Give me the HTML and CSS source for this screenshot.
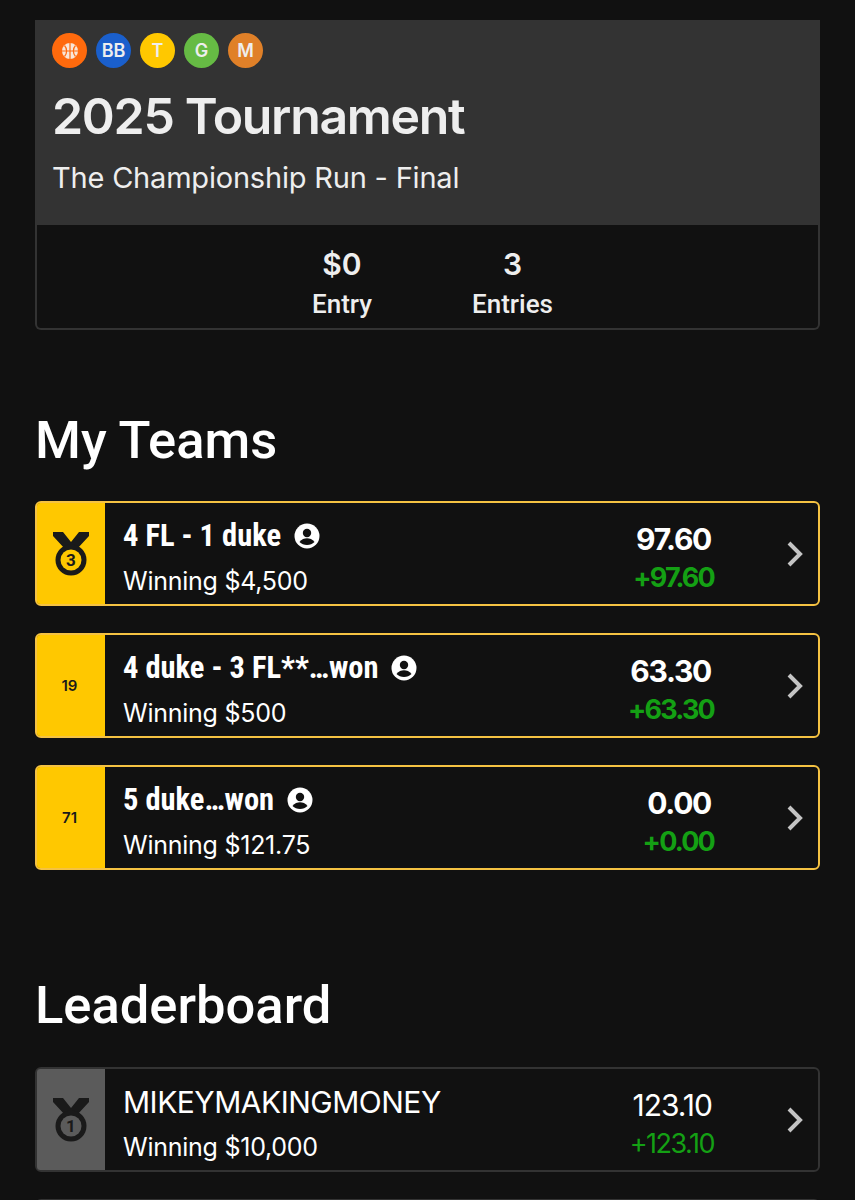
FILE: index.html
```html
<!DOCTYPE html>
<html lang="en">
<head>
    <meta charset="UTF-8">
    <meta name="viewport" content="width=device-width, initial-scale=1.0">
    <title>2025 Tournament</title>
    <link rel="stylesheet" href="styles.css">
</head>
<body>
    <!-- Tournament summary -->
    <section class="summary">
        <div class="summary-top">
            <div class="badges">
                <span class="badge badge-orange">
                    <svg width="18" height="18" viewBox="0 0 18 18" fill="none">
                        <circle cx="9" cy="9" r="8" fill="#f8e6d8"/>
                        <path d="M9 1v16M1 9h16" stroke="#ff6a0d" stroke-width="1.2"/>
                        <path d="M3.500 3.500c2.800 3 2.800 8 0 11M14.500 3.500c-2.800 3-2.800 8 0 11" stroke="#ff6a0d" stroke-width="1.2"/>
                    </svg>
                </span>
                <span class="badge badge-blue">BB</span>
                <span class="badge badge-yellow">T</span>
                <span class="badge badge-green">G</span>
                <span class="badge badge-amber">M</span>
            </div>
            <h1>2025 Tournament</h1>
            <p class="subtitle">The Championship Run - Final</p>
        </div>
        <div class="stats">
            <div class="stat">
                <div class="stat-value">$0</div>
                <div class="stat-label">Entry</div>
            </div>
            <div class="stat">
                <div class="stat-value">3</div>
                <div class="stat-label">Entries</div>
            </div>
        </div>
    </section>

    <h2 class="section-title teams-title">My Teams</h2>

    <div class="rows">
        <div class="row row-mine">
            <div class="rank">
                <svg class="medal" width="36" height="44" viewBox="0 0 36 44">
                    <path d="M0 0h10l8 10 8-10h10v4L24 17H12L0 4z" fill="#1a1a1a"/>
                    <circle cx="18" cy="28" r="15.500" fill="#1a1a1a"/>
                    <circle cx="18" cy="28" r="10.500" fill="#ffc800"/>
                    <text x="18" y="34" text-anchor="middle" class="medal-num">3</text>
                </svg>
            </div>
            <div class="info">
                <div class="team-name">4 FL - 1 duke
                    <svg class="user" width="26" height="26" viewBox="0 0 26 26"><circle cx="13" cy="13" r="12.500" fill="#fff"/><circle cx="13" cy="10" r="4.200" fill="#111"/><path d="M5.500 19c2-3 5-3.800 7.500-3.800s5.500.8 7.500 3.800c-2 2-4.600 3-7.500 3s-5.500-1-7.500-3z" fill="#111"/></svg>
                </div>
                <div class="winning">Winning $4,500</div>
            </div>
            <div class="score">
                <div class="points">97.60</div>
                <div class="delta">+97.60</div>
            </div>
            <svg class="chev" width="18" height="26" viewBox="0 0 18 26" fill="none"><path d="M3 2l11 11L3 24" stroke="#c4c4c4" stroke-width="4"/></svg>
        </div>

        <div class="row row-mine">
            <div class="rank">19</div>
            <div class="info">
                <div class="team-name">4 duke - 3 FL**…won
                    <svg class="user" width="26" height="26" viewBox="0 0 26 26"><circle cx="13" cy="13" r="12.500" fill="#fff"/><circle cx="13" cy="10" r="4.200" fill="#111"/><path d="M5.500 19c2-3 5-3.800 7.500-3.800s5.500.8 7.500 3.800c-2 2-4.600 3-7.500 3s-5.500-1-7.500-3z" fill="#111"/></svg>
                </div>
                <div class="winning">Winning $500</div>
            </div>
            <div class="score">
                <div class="points">63.30</div>
                <div class="delta">+63.30</div>
            </div>
            <svg class="chev" width="18" height="26" viewBox="0 0 18 26" fill="none"><path d="M3 2l11 11L3 24" stroke="#c4c4c4" stroke-width="4"/></svg>
        </div>

        <div class="row row-mine">
            <div class="rank">71</div>
            <div class="info">
                <div class="team-name">5 duke…won
                    <svg class="user" width="26" height="26" viewBox="0 0 26 26"><circle cx="13" cy="13" r="12.500" fill="#fff"/><circle cx="13" cy="10" r="4.200" fill="#111"/><path d="M5.500 19c2-3 5-3.800 7.500-3.800s5.500.8 7.500 3.800c-2 2-4.600 3-7.500 3s-5.500-1-7.500-3z" fill="#111"/></svg>
                </div>
                <div class="winning">Winning $121.75</div>
            </div>
            <div class="score">
                <div class="points">0.00</div>
                <div class="delta">+0.00</div>
            </div>
            <svg class="chev" width="18" height="26" viewBox="0 0 18 26" fill="none"><path d="M3 2l11 11L3 24" stroke="#c4c4c4" stroke-width="4"/></svg>
        </div>
    </div>

    <h2 class="section-title board-title">Leaderboard</h2>

    <div class="rows">
        <div class="row row-other">
            <div class="rank">
                <svg class="medal" width="36" height="44" viewBox="0 0 36 44">
                    <path d="M0 0h10l8 10 8-10h10v4L24 17H12L0 4z" fill="#1a1a1a"/>
                    <circle cx="18" cy="28" r="15.500" fill="#1a1a1a"/>
                    <circle cx="18" cy="28" r="10.500" fill="#5b5b5b"/>
                    <text x="18" y="34" text-anchor="middle" class="medal-num">1</text>
                </svg>
            </div>
            <div class="info">
                <div class="player-name">MIKEYMAKINGMONEY</div>
                <div class="winning">Winning $10,000</div>
            </div>
            <div class="score">
                <div class="points points-light">123.10</div>
                <div class="delta delta-light">+123.10</div>
            </div>
            <svg class="chev" width="18" height="26" viewBox="0 0 18 26" fill="none"><path d="M3 2l11 11L3 24" stroke="#c4c4c4" stroke-width="4"/></svg>
        </div>
        <div class="row row-other"></div>
    </div>
</body>
</html>
```

FILE: styles.css
```css
/* General Styles */
html {
    overflow: hidden;
    height: 1200px;
}

body {
    font-family: Inter, "Noto Sans", sans-serif;
    margin: 0;
    padding: 20px 35px 0 35px;
    background-color: #111;
    color: #fff;
}

/* Tournament summary */
.summary {
    border: 2px solid #333;
    border-top: none;
    border-radius: 0 0 6px 6px;
}

.summary-top {
    background-color: #333;
    margin: 0 -1px;
    height: 205px;
    padding: 13px 16px 0 16px;
    box-sizing: border-box;
}

.badges {
    display: flex;
    gap: 9px;
}

.badge {
    width: 35px;
    height: 35px;
    border-radius: 50%;
    display: flex;
    align-items: center;
    justify-content: center;
    font-size: 18px;
    font-weight: 600;
    color: #eee;
}

.badge-orange { background-color: #ff6a0d; }
.badge-blue { background-color: #1a5fcc; }
.badge-yellow { background-color: #ffc800; }
.badge-green { background-color: #66bb44; }
.badge-amber { background-color: #e08028; }

h1 {
    font-size: 50px;
    line-height: 60px;
    font-weight: 600;
    letter-spacing: -1.3px;
    color: #eee;
    margin: 18px 0 0 0;
}

.subtitle {
    font-size: 29px;
    line-height: 36px;
    letter-spacing: -0.2px;
    color: #eee;
    margin: 14px 0 0 0;
}

.stats {
    display: flex;
    justify-content: center;
    gap: 100px;
    height: 103px;
    padding: 21px 0 0 10px;
    box-sizing: border-box;
}

.stat {
    text-align: center;
    color: #eee;
}

.stat-value {
    font-size: 30px;
    line-height: 36px;
    font-weight: 600;
}

.stat-label {
    font-size: 26px;
    line-height: 36px;
    font-weight: 500;
    font-family: Roboto, sans-serif;
    margin-top: 4px;
}

/* Section headings */
.section-title {
    font-size: 52.5px;
    line-height: 60px;
    font-weight: 500;
    font-family: Roboto, sans-serif;
    margin: 0;
}

.teams-title {
    margin-top: 80px;
    margin-bottom: 31px;
}

.board-title {
    margin-top: 105px;
    margin-bottom: 32px;
}

/* Team rows */
.rows {
    display: flex;
    flex-direction: column;
    gap: 27px;
}

.row {
    display: flex;
    align-items: center;
    height: 105px;
    min-height: 105px;
    box-sizing: border-box;
    border: 2px solid;
    border-radius: 6px;
    background-color: #111;
}

.row-mine { border-color: #f5c242; }
.row-other { border-color: #333; }

.rank {
    width: 68px;
    align-self: stretch;
    flex-shrink: 0;
    display: flex;
    align-items: center;
    justify-content: center;
    font-size: 15px;
    font-weight: 600;
    color: #1a1a1a;
    border-radius: 3px 0 0 3px;
    padding-right: 3px;
    box-sizing: border-box;
}

.row-mine .rank { background-color: #ffc800; }
.row-other .rank { background-color: #5b5b5b; }

.medal {
    margin-left: 3px;
}

.medal-num {
    font-family: Roboto, sans-serif;
    font-size: 17px;
    font-weight: 700;
    fill: #1a1a1a;
}

.info {
    flex-grow: 1;
    padding: 10px 0 0 18px;
}

.team-name {
    display: flex;
    align-items: center;
    gap: 13px;
    font-family: Roboto, sans-serif;
    font-stretch: 75%;
    font-size: 30.500px;
    line-height: 36px;
    font-weight: 700;
}

.player-name {
    font-family: Inter, sans-serif;
    font-size: 30px;
    line-height: 36px;
    letter-spacing: -0.5px;
}

.winning {
    font-size: 25px;
    line-height: 36px;
    margin-top: 9px;
    letter-spacing: -0.25px;
}

.score {
    margin-right: 72px;
    padding-top: 10px;
    display: flex;
    flex-direction: column;
    align-items: flex-end;
}

.points {
    font-size: 30px;
    line-height: 36px;
    font-weight: 700;
    letter-spacing: -1.3px;
    margin-right: 3px;
}

.points-light {
    font-weight: 400;
    letter-spacing: -1px;
    margin-right: 2px;
}

.delta {
    font-size: 27px;
    line-height: 36px;
    font-weight: 700;
    letter-spacing: -1.8px;
    color: #14a014;
    margin-top: 3px;
}

.delta-light {
    font-weight: 400;
    letter-spacing: -1.500px;
}

.chev {
    flex-shrink: 0;
    margin-right: 14px;
}
```
